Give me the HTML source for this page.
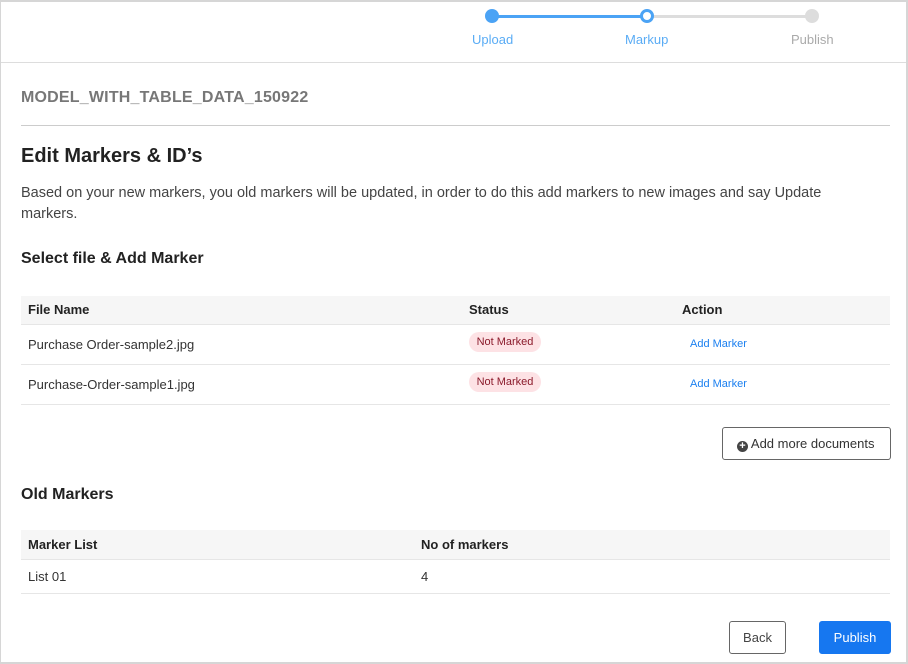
<!DOCTYPE html>
<html><head><style>
*{box-sizing:border-box;margin:0;padding:0}
body{width:908px;height:664px;background:#fff;font-family:"Liberation Sans",sans-serif;color:#333;position:relative;overflow:hidden}
.frame{position:absolute;left:0;top:0;width:908px;height:664px;border:2px solid #d6d6d6;border-left-width:1px}
.a{position:absolute;white-space:nowrap}
.line{position:absolute;height:1px;background:#e6e6e6}
</style></head><body>
<div class="frame"></div>
<div class="a" style="left:492px;top:15px;width:155px;height:3px;background:#4ba3f5"></div>
<div class="a" style="left:647px;top:15px;width:165px;height:3px;background:#ddd"></div>
<div class="a" style="left:485px;top:9px;width:14px;height:14px;border-radius:50%;background:#4ba3f5"></div>
<div class="a" style="left:640px;top:9px;width:14px;height:14px;border-radius:50%;background:#fff;border:3px solid #4ba3f5"></div>
<div class="a" style="left:805px;top:9px;width:14px;height:14px;border-radius:50%;background:#ddd"></div>
<div class="a" style="left:472px;top:32px;font-size:13px;color:#5aacf5">Upload</div>
<div class="a" style="left:625px;top:32px;font-size:13px;color:#5aacf5">Markup</div>
<div class="a" style="left:791px;top:32px;font-size:13px;color:#aaa">Publish</div>
<div class="line" style="left:1px;top:62px;width:905px;background:#ddd"></div>
<div class="a" style="left:21px;top:89px;font-size:16px;font-weight:bold;color:#777;letter-spacing:0.2px">MODEL_WITH_TABLE_DATA_150922</div>
<div class="line" style="left:21px;top:125px;width:869px;background:#ccc"></div>
<div class="a" style="left:21px;top:145px;font-size:20px;font-weight:bold;color:#222">Edit Markers &amp; ID’s</div>
<div class="a" style="left:21px;top:183px;font-size:14.5px;color:#444;line-height:21px;white-space:normal;width:830px">Based on your new markers, you old markers will be updated, in order to do this add markers to new images and say Update markers.</div>
<div class="a" style="left:21px;top:250px;font-size:16px;font-weight:bold;color:#222">Select file &amp; Add Marker</div>
<div class="a" style="left:21px;top:296px;width:869px;height:28px;background:#f6f6f6"></div>
<div class="line" style="left:21px;top:324px;width:869px"></div>
<div class="line" style="left:21px;top:364px;width:869px"></div>
<div class="line" style="left:21px;top:404px;width:869px"></div>
<div class="a" style="left:28px;top:302px;font-size:13px;font-weight:bold;color:#222">File Name</div>
<div class="a" style="left:469px;top:302px;font-size:13px;font-weight:bold;color:#222">Status</div>
<div class="a" style="left:682px;top:302px;font-size:13px;font-weight:bold;color:#222">Action</div>
<div class="a" style="left:28px;top:337px;font-size:13px;color:#333">Purchase Order-sample2.jpg</div>
<div class="a" style="left:28px;top:377px;font-size:13px;color:#333">Purchase-Order-sample1.jpg</div>
<div class="a" style="left:469px;top:332px;height:20px;width:72px;border-radius:10px;background:#fde2e5;color:#8b1a2b;font-size:11px;text-align:center;line-height:20px">Not Marked</div>
<div class="a" style="left:469px;top:372px;height:20px;width:72px;border-radius:10px;background:#fde2e5;color:#8b1a2b;font-size:11px;text-align:center;line-height:20px">Not Marked</div>
<div class="a" style="left:690px;top:338px;font-size:11px;color:#1a7ff0">Add Marker</div>
<div class="a" style="left:690px;top:378px;font-size:11px;color:#1a7ff0">Add Marker</div>
<div class="a" style="left:722px;top:427px;width:169px;height:33px;border:1px solid #666;border-radius:3px;font-size:13px;color:#333;line-height:31px;padding-left:14px"><span style="display:inline-block;width:11px;height:11px;border-radius:50%;background:#444;color:#fff;font-size:11px;line-height:11px;text-align:center;font-weight:bold;vertical-align:-1px">+</span> Add more documents</div>
<div class="a" style="left:21px;top:486px;font-size:16px;font-weight:bold;color:#222">Old Markers</div>
<div class="a" style="left:21px;top:530px;width:869px;height:29px;background:#f6f6f6"></div>
<div class="line" style="left:21px;top:559px;width:869px"></div>
<div class="line" style="left:21px;top:593px;width:869px"></div>
<div class="a" style="left:28px;top:537px;font-size:13px;font-weight:bold;color:#222">Marker List</div>
<div class="a" style="left:421px;top:537px;font-size:13px;font-weight:bold;color:#222">No of markers</div>
<div class="a" style="left:28px;top:569px;font-size:13px;color:#333">List 01</div>
<div class="a" style="left:421px;top:569px;font-size:13px;color:#333">4</div>
<div class="a" style="left:729px;top:621px;width:57px;height:33px;border:1px solid #666;border-radius:3px;font-size:13px;color:#444;text-align:center;line-height:31px">Back</div>
<div class="a" style="left:819px;top:621px;width:72px;height:33px;background:#1677f0;border-radius:3px;font-size:13px;color:#fff;text-align:center;line-height:33px">Publish</div>
</body></html>
